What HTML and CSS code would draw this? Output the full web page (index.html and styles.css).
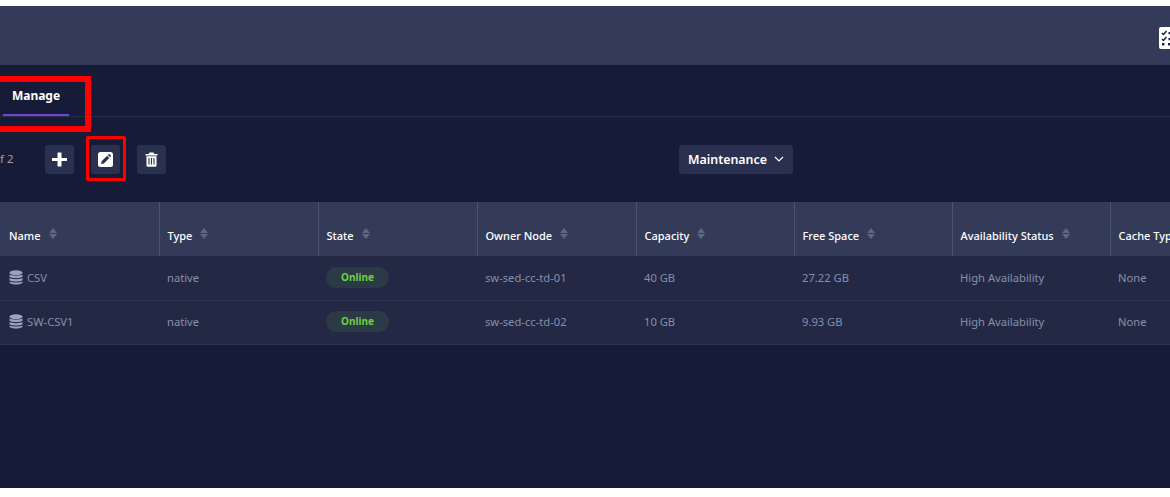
FILE: index.html
```html
<!DOCTYPE html>
<html lang="en">
<head>
<meta charset="utf-8">
<title>Manage</title>
<link rel="stylesheet" href="styles.css">
</head>
<body>
<div class="app">
  <header class="topbar">
    <svg class="task-icon" width="20" height="22" viewBox="0 0 20 22"><rect width="20" height="22" rx="2" fill="#fff"/><path d="M3 6l1.5 1.500L7.500 4M3 12l1.500 1.500L7.500 10" fill="none" stroke="#1a2140" stroke-width="1.500"/><rect x="9.500" y="5" width="4" height="2.200" fill="#1a2140"/><rect x="9.500" y="11" width="4" height="2.200" fill="#1a2140"/><rect x="3" y="16" width="2.400" height="2.400" fill="#1a2140"/><rect x="9" y="16" width="2.400" height="2.400" fill="#1a2140"/></svg>
  </header>
  <main class="content">
    <nav class="tabs">
      <div class="tab">Manage</div>
    </nav>
    <div class="toolbar">
      <span class="page-count">f 2</span>
      <div class="actions">
        <button class="icon-btn" type="button" aria-label="Add">
          <svg width="15" height="15" viewBox="0 0 15 15"><path d="M6 .5h3a.5.5 0 0 1 .5.5v5h5a.5.5 0 0 1 .5.5v2a.5.5 0 0 1-.5.5h-5v5a.5.5 0 0 1-.5.5H6a.5.5 0 0 1-.5-.5V9h-5a.5.5 0 0 1-.5-.5v-2a.5.5 0 0 1 .5-.5h5V1A.5.5 0 0 1 6 .5z" fill="#fff"/></svg>
        </button>
        <button class="icon-btn" type="button" aria-label="Edit">
          <svg width="15" height="15" viewBox="0 0 15 15"><rect width="15" height="15" rx="2.500" fill="#fff"/><path d="M3 12l.6-2.800 5.500-5.500 2.200 2.200-5.500 5.500zM9.800 3l.8-.8a.6.6 0 0 1 .9 0l1.300 1.300a.6.6 0 0 1 0 .9l-.8.8z" fill="#2a3150"/></svg>
        </button>
        <button class="icon-btn" type="button" aria-label="Delete">
          <svg width="13" height="15" viewBox="0 0 13 15"><path d="M4.500 .5h4l.8 1.500h3.200v1.500H.5V2h3.200zM1.500 4.300h10v9.200a1.300 1.300 0 0 1-1.300 1.300H2.800a1.300 1.300 0 0 1-1.300-1.300z" fill="#fff"/><path d="M4 6v6.500M6.500 6v6.500M9 6v6.500" stroke="#2a3150" stroke-width="1.100"/></svg>
        </button>
      </div>
      <button class="menu-btn" type="button">Maintenance
        <svg width="10" height="6" viewBox="0 0 10 6"><path d="M1 1l4 4 4-4" fill="none" stroke="#fff" stroke-width="1.200"/></svg>
      </button>
    </div>
    <table class="grid">
      <colgroup><col class="c159"><col class="c159"><col class="c159"><col class="c159"><col class="c158"><col class="c158"><col class="c158"><col class="c160"></colgroup>
      <thead>
        <tr>
          <th>Name<span class="sort"></span></th>
          <th>Type<span class="sort"></span></th>
          <th>State<span class="sort"></span></th>
          <th>Owner Node<span class="sort"></span></th>
          <th>Capacity<span class="sort"></span></th>
          <th>Free Space<span class="sort"></span></th>
          <th>Availability Status<span class="sort"></span></th>
          <th>Cache Type<span class="sort"></span></th>
        </tr>
      </thead>
      <tbody>
        <tr>
          <td><span class="name-cell"><svg width="14" height="15" viewBox="0 0 14 15"><g fill="#9aa3bd"><ellipse cx="7" cy="2.800" rx="6.500" ry="2.500"/><path d="M.5 4.500C2 6 12 6 13.500 4.500v2.300C12 8.500 2 8.500 .5 6.800zM.5 8c1.500 1.500 11.500 1.500 13 0v2.300c-1.500 1.700-11.500 1.700-13 0zM.5 11.400c1.500 1.500 11.500 1.500 13 0v1.300c-1.500 2.400-11.500 2.400-13 0z"/></g></svg>CSV</span></td>
          <td>native</td>
          <td><span class="badge">Online</span></td>
          <td>sw-sed-cc-td-01</td>
          <td>40 GB</td>
          <td>27.22 GB</td>
          <td>High Availability</td>
          <td>None</td>
        </tr>
        <tr>
          <td><span class="name-cell"><svg width="14" height="15" viewBox="0 0 14 15"><g fill="#9aa3bd"><ellipse cx="7" cy="2.800" rx="6.500" ry="2.500"/><path d="M.5 4.500C2 6 12 6 13.500 4.500v2.300C12 8.500 2 8.500 .5 6.800zM.5 8c1.500 1.500 11.500 1.500 13 0v2.300c-1.500 1.700-11.500 1.700-13 0zM.5 11.400c1.500 1.500 11.500 1.500 13 0v1.300c-1.500 2.400-11.500 2.400-13 0z"/></g></svg>SW-CSV1</span></td>
          <td>native</td>
          <td><span class="badge">Online</span></td>
          <td>sw-sed-cc-td-02</td>
          <td>10 GB</td>
          <td>9.93 GB</td>
          <td>High Availability</td>
          <td>None</td>
        </tr>
      </tbody>
    </table>
  </main>
</div>
<div class="mark mark-tab"></div>
<div class="mark mark-edit"></div>
</body>
</html>
```
FILE: styles.css
```css
* { box-sizing: border-box; }
html, body { margin: 0; height: 100%; background: #fff; overflow: hidden; }
body { font-family: "Noto Sans", "Open Sans", sans-serif; font-size: 11.200px; position: relative; }
.app { margin-top: 6px; height: 482px; background: #161c38; overflow: hidden; display: flex; flex-direction: column; }
.topbar { height: 59px; flex: none; background: #333b58; display: flex; align-items: center; justify-content: flex-end; padding-top: 5px; margin-right: -9px; }
.task-icon { display: block; }
.content { flex: 1; }
.tabs { height: 52px; border-bottom: 1px solid #2a3049; padding-left: 3px; display: flex; align-items: flex-end; }
.tab { width: 66px; height: 37px; text-align: center; color: #fff; font-weight: 700; font-size: 12px; line-height: 34px; border-bottom: 2px solid #6f45d8; }
.toolbar { height: 85px; position: relative; display: flex; align-items: center; }
.page-count { color: #99a1b8; width: 45px; flex: none; line-height: 1; margin-bottom: 2px; font-size: 11.500px; }
.actions { display: flex; gap: 17px; margin-top: -1px; }
.icon-btn { width: 29px; height: 29px; padding: 0; border: 0; border-radius: 3px; background: #2a3150; display: flex; align-items: center; justify-content: center; }
.menu-btn { margin-left: 513px; margin-top: -1px; width: 114px; height: 29px; padding: 0; border: 0; border-radius: 3px; background: #2a3150; color: #fff; font: 600 12.400px "Noto Sans", sans-serif; display: flex; align-items: center; justify-content: center; gap: 7px; }
.grid { table-layout: fixed; width: 1270px; border-collapse: collapse; border-spacing: 0; }
.c160 { width: 160px; }
.c159 { width: 159px; }
.c158 { width: 158px; }
.grid th { height: 54px; padding: 10px 7px 0 8px; background: #333b58; color: #fff; font-weight: 500; font-size: 11px; text-align: left; border-right: 1px solid #4b5270; line-height: 1; white-space: nowrap; }
.grid th:first-child { padding-left: 9px; }
.sort { display: inline-block; position: relative; width: 9px; height: 11px; margin-left: 8px; vertical-align: 1px; }
.sort::before, .sort::after { content: ""; position: absolute; left: 0; border-left: 4.500px solid transparent; border-right: 4.500px solid transparent; }
.sort::before { top: 0; border-bottom: 5px solid #5f6681; }
.sort::after { bottom: 0; border-top: 5px solid #5f6681; }
.grid td { height: 44.300px; padding: 0 7px 1px 8px; background: #232944; color: #8690ab; border-bottom: 1px solid #2d3450; white-space: nowrap; }
.grid td:first-child { padding-left: 9px; }
.name-cell { display: flex; align-items: center; gap: 4px; }
.badge { display: inline-block; width: 63px; height: 21px; border-radius: 11px; background: #2c3a45; color: #6cd044; font-weight: 700; font-size: 10px; text-align: center; line-height: 20px; }
.mark { position: absolute; border: solid #f00; }
.mark-tab { left: -6px; top: 76px; width: 97px; height: 56px; border-width: 6px; }
.mark-edit { left: 86px; top: 136px; width: 40px; height: 45px; border-width: 3px; border-radius: 2px; }
```
